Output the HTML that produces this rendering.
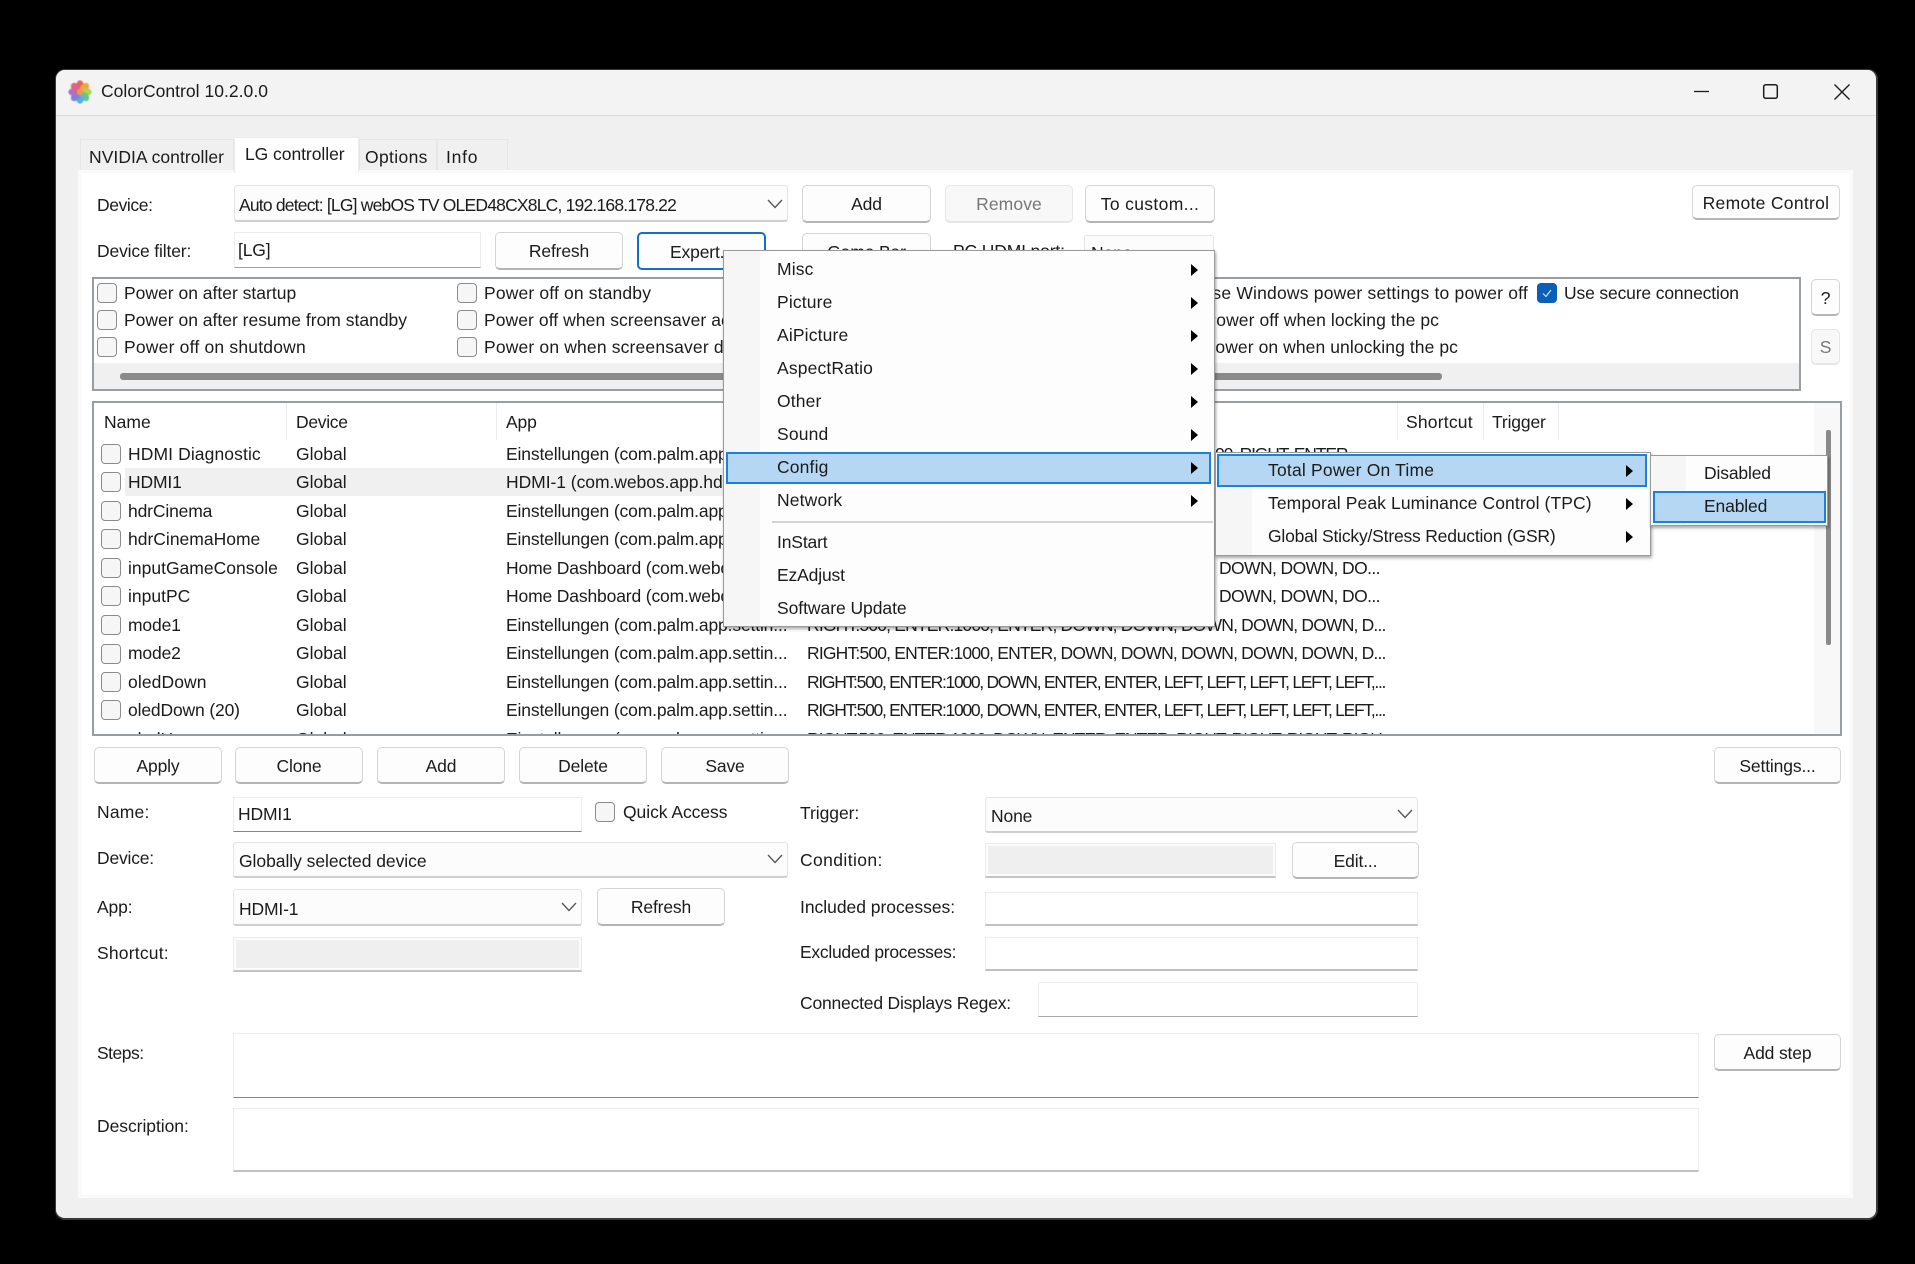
<!DOCTYPE html>
<html><head><meta charset="utf-8"><title>ColorControl</title>
<style>
html,body{margin:0;padding:0;background:#000;width:1915px;height:1264px;overflow:hidden}
body{position:relative;font-family:"Liberation Sans",sans-serif;font-size:17.5px;color:#1b1b1b;letter-spacing:-.15px}
.a,.t,.btn,.in,.cb{position:absolute;box-sizing:border-box}
.t{white-space:nowrap;line-height:20px;height:20px}
.m{letter-spacing:.15px}
.btn{background:#fdfdfd;border:1px solid #d4d4d4;border-bottom:2px solid #b4b4b4;border-radius:5px;display:flex;align-items:center;justify-content:center;white-space:nowrap;padding-top:2px}
.dis{background:#f8f8f8;border-color:#e6e6e6;color:#767676}
.in{background:#fff;border:1px solid #ececec;border-bottom:1.5px solid #858585}
.lt{border-bottom:2px solid #c0c0c0}
.gr{background:#efefef;box-shadow:inset 0 0 0 2px #fbfbfb;border:1px solid #ececec;border-bottom:2px solid #c4c4c4}
.combo{background:#fcfcfc;border:1px solid #e4e4e4;border-bottom:2px solid #cfcfcf;border-radius:3px}
.cb{width:20px;height:20px;background:#f6f6f6;border:1.5px solid #8b8b8b;border-radius:4px}
.tab{background:#f0f0f0;border:1px solid #e6e6e6;border-bottom:0}
.div{position:absolute;width:1px;background:#ececec;top:403px;height:37px}
.menu{background:#fdfdfd;border:1px solid #9a9a9a;box-shadow:1px 2px 3px rgba(0,0,0,.35)}
.gut{background:#f6f6f6}
.hl{background:#b5d7f3;border:2px solid #1a82de}
.arr{position:absolute;width:0;height:0;border-left:7px solid #000;border-top:6px solid transparent;border-bottom:6px solid transparent}
</style></head><body>

<!-- window -->
<div class="a" style="left:55px;top:69px;width:1823px;height:1151px;background:#f0f0f0;border-radius:10px;border:2px solid #3a3a3a;border-width:1px 2px 2px 1px"></div>
<div class="a" style="left:56px;top:70px;width:1820px;height:45px;background:#f3f3f3;border-bottom:1px solid #d9d9d9;border-radius:9px 9px 0 0;box-sizing:content-box"></div>

<svg class="a" style="left:68px;top:80px;filter:blur(.5px);opacity:.88" width="24" height="24" viewBox="0 0 24 24">
<g transform="translate(12 12)">
<ellipse cx="0" cy="-6.5" rx="3.8" ry="5.2" fill="#e9503f"/>
<ellipse cx="0" cy="-6.5" rx="3.8" ry="5.2" fill="#f39a2b" transform="rotate(45)"/>
<ellipse cx="0" cy="-6.5" rx="3.8" ry="5.2" fill="#a8cf3c" transform="rotate(90)"/>
<ellipse cx="0" cy="-6.5" rx="3.8" ry="5.2" fill="#4fc07a" transform="rotate(135)"/>
<ellipse cx="0" cy="-6.5" rx="3.8" ry="5.2" fill="#3ea7ea" transform="rotate(180)"/>
<ellipse cx="0" cy="-6.5" rx="3.8" ry="5.2" fill="#6b73d6" transform="rotate(225)"/>
<ellipse cx="0" cy="-6.5" rx="3.8" ry="5.2" fill="#a65fb5" transform="rotate(270)"/>
<ellipse cx="0" cy="-6.5" rx="3.8" ry="5.2" fill="#d94f7c" transform="rotate(315)"/>
<circle r="3.2" fill="#f08a3a"/>
</g></svg>
<div class="t" style="left:101px;top:81px;letter-spacing:.03px">ColorControl 10.2.0.0</div>

<svg class="a" style="left:1690px;top:80px" width="170" height="24" fill="none" stroke="#1d1d1d">
<path d="M4 11.5H19" stroke-width="1.3"/>
<rect x="73.7" y="4.7" width="13.6" height="13.6" rx="2" stroke-width="1.5"/>
<path d="M144.5 4.5L159.5 19.5M159.5 4.5L144.5 19.5" stroke-width="1.4"/>
</svg>

<!-- tabs -->
<div class="a tab" style="left:80px;top:139px;width:154px;height:33px"></div>
<div class="a tab" style="left:359px;top:139px;width:78px;height:33px"></div>
<div class="a tab" style="left:437px;top:139px;width:71px;height:33px"></div>
<div class="a" style="left:78px;top:170px;width:1775px;height:1028px;background:#fff;box-shadow:inset 0 0 0 3px #fafafa"></div>
<div class="a" style="left:234px;top:137px;width:125px;height:36px;background:#fff;border:1px solid #ececec;border-bottom:0;box-sizing:border-box"></div>
<div class="t" style="left:89px;top:147px;letter-spacing:.05px">NVIDIA controller</div>
<div class="t" style="left:245px;top:144px;letter-spacing:-.05px">LG controller</div>
<div class="t" style="left:365px;top:147px;letter-spacing:.35px">Options</div>
<div class="t" style="left:446px;top:147px;letter-spacing:.75px">Info</div>

<!-- row 1 -->
<div class="t" style="left:97px;top:195px;letter-spacing:-.4px">Device:</div>
<div class="a combo" style="left:234px;top:185px;width:554px;height:37px"></div>
<div class="t" style="left:239px;top:195px;letter-spacing:-.8px">Auto detect: [LG] webOS TV OLED48CX8LC, 192.168.178.22</div>
<svg class="a" style="left:767px;top:198px" width="16" height="12" fill="none" stroke="#555" stroke-width="1.3"><path d="M1 2L8 9.5L15 2"/></svg>
<div class="btn" style="left:802px;top:185px;width:129px;height:38px">Add</div>
<div class="btn dis" style="left:945px;top:185px;width:128px;height:38px;letter-spacing:.1px">Remove</div>
<div class="btn" style="left:1085px;top:185px;width:130px;height:38px;letter-spacing:.35px">To custom...</div>
<div class="btn" style="left:1692px;top:185px;width:148px;height:35px;letter-spacing:.3px">Remote Control</div>

<!-- row 2 -->
<div class="t" style="left:97px;top:241px;">Device filter:</div>
<div class="in" style="left:234px;top:232px;width:247px;height:36px;border-bottom-color:#a0a0a0"></div>
<div class="t" style="left:238px;top:240px;">[LG]</div>
<div class="btn" style="left:495px;top:232px;width:128px;height:38px">Refresh</div>
<div class="btn" style="left:637px;top:232px;width:129px;height:38px;border:2px solid #0f72c8;justify-content:flex-start;padding-left:31px">Expert...</div>
<div class="btn" style="left:802px;top:233px;width:129px;height:38px">Game Bar</div>
<div class="t" style="left:953px;top:241px;">PC HDMI port:</div>
<div class="a combo" style="left:1084px;top:235px;width:130px;height:36px"></div>
<div class="t" style="left:1091px;top:243px;">None</div>

<!-- options group -->
<div class="a" style="left:92px;top:277px;width:1709px;height:114px;background:#fff;border:2px solid #989da2;box-sizing:border-box"></div>
<div class="a" style="left:94px;top:363px;width:1705px;height:26px;background:#f0f0f0"></div>
<div class="a" style="left:120px;top:373px;width:1322px;height:7px;background:#8a8a8a;border-radius:3px"></div>
<div class="cb" style="left:97px;top:283px"></div><div class="t" style="left:124px;top:283px;letter-spacing:0">Power on after startup</div>
<div class="cb" style="left:97px;top:310px"></div><div class="t" style="left:124px;top:310px;letter-spacing:0">Power on after resume from standby</div>
<div class="cb" style="left:97px;top:337px"></div><div class="t" style="left:124px;top:337px;letter-spacing:.2px">Power off on shutdown</div>
<div class="cb" style="left:457px;top:283px"></div><div class="t" style="left:484px;top:283px;letter-spacing:.15px">Power off on standby</div>
<div class="cb" style="left:457px;top:310px"></div><div class="t" style="left:484px;top:310px;letter-spacing:.07px">Power off when screensaver activates</div>
<div class="cb" style="left:457px;top:337px"></div><div class="t" style="left:484px;top:337px;letter-spacing:.16px">Power on when screensaver deactivates</div>
<div class="t" style="right:387px;top:283px;letter-spacing:.2px">Use Windows power settings to power off</div>
<div class="t" style="right:476px;top:310px;letter-spacing:.08px">Power off when locking the pc</div>
<div class="t" style="right:457px;top:337px;letter-spacing:.08px">Power on when unlocking the pc</div>
<div class="a" style="left:1537px;top:283px;width:20px;height:20px;background:#0a5fb8;border-radius:4px"></div>
<svg class="a" style="left:1537px;top:283px" width="20" height="20" fill="none" stroke="#cfe4f7" stroke-width="1.2"><path d="M6 10.5L9 13.5L14 7"/></svg>
<div class="t" style="left:1564px;top:283px;">Use secure connection</div>
<div class="btn" style="left:1811px;top:279px;width:29px;height:37px">?</div>
<div class="btn dis" style="left:1811px;top:329px;width:29px;height:36px">S</div>

<!-- list -->
<div class="a" style="left:92px;top:401px;width:1750px;height:335px;background:#fff;border:2px solid #989da2;box-sizing:border-box;overflow:hidden">
<div class="a" style="left:1720px;top:0;width:28px;height:331px;background:#f8f8f8"></div>
<div class="a" style="left:1732px;top:27px;width:5px;height:215px;background:#8a8a8a;border-radius:2px"></div>
<div class="a" style="left:31px;top:65px;width:1680px;height:28px;background:#f0f0f0"></div>
<div class="cb" style="left:7px;top:335px"></div>
<div class="t" style="left:34px;top:326px;">oledUp</div><div class="t" style="left:202px;top:326px;letter-spacing:0">Global</div>
<div class="t" style="left:412px;top:326px;">Einstellungen (com.palm.app.settin...</div>
<div class="t" style="left:713px;top:326px;letter-spacing:-1px">RIGHT:500, ENTER:1000, DOWN, ENTER, ENTER, RIGHT, RIGHT, RIGHT, RIGH...</div>
</div>
<div class="div" style="left:286px"></div><div class="div" style="left:496px"></div><div class="div" style="left:1397px"></div><div class="div" style="left:1483px"></div><div class="div" style="left:1558px"></div>
<div class="t" style="left:104px;top:412px;letter-spacing:0">Name</div>
<div class="t" style="left:296px;top:412px;letter-spacing:-.3px">Device</div>
<div class="t" style="left:506px;top:412px;">App</div>
<div class="t" style="left:1406px;top:412px;letter-spacing:.2px">Shortcut</div>
<div class="t" style="left:1492px;top:412px;">Trigger</div>

<div class="cb" style="left:101px;top:444px"></div><div class="t" style="left:128px;top:444px;letter-spacing:.1px">HDMI Diagnostic</div><div class="t" style="left:296px;top:444px;letter-spacing:0">Global</div><div class="t" style="left:506px;top:444px;">Einstellungen (com.palm.app.settin...</div><div class="t" style="left:1215px;top:444px;letter-spacing:-1.15px">00, RIGHT, ENTER</div>
<div class="cb" style="left:101px;top:472px"></div><div class="t" style="left:128px;top:472px;">HDMI1</div><div class="t" style="left:296px;top:472px;letter-spacing:0">Global</div><div class="t" style="left:506px;top:472px;letter-spacing:-.05px">HDMI-1 (com.webos.app.hdmi1)</div>
<div class="cb" style="left:101px;top:501px"></div><div class="t" style="left:128px;top:501px;">hdrCinema</div><div class="t" style="left:296px;top:501px;letter-spacing:0">Global</div><div class="t" style="left:506px;top:501px;">Einstellungen (com.palm.app.settin...</div>
<div class="cb" style="left:101px;top:529px"></div><div class="t" style="left:128px;top:529px;letter-spacing:0">hdrCinemaHome</div><div class="t" style="left:296px;top:529px;letter-spacing:0">Global</div><div class="t" style="left:506px;top:529px;">Einstellungen (com.palm.app.settin...</div>
<div class="cb" style="left:101px;top:558px"></div><div class="t" style="left:128px;top:558px;letter-spacing:0">inputGameConsole</div><div class="t" style="left:296px;top:558px;letter-spacing:0">Global</div><div class="t" style="left:506px;top:558px;">Home Dashboard (com.webos.app.home)</div><div class="t" style="left:1219px;top:558px;letter-spacing:-.6px">DOWN, DOWN, DO...</div>
<div class="cb" style="left:101px;top:586px"></div><div class="t" style="left:128px;top:586px;letter-spacing:0">inputPC</div><div class="t" style="left:296px;top:586px;letter-spacing:0">Global</div><div class="t" style="left:506px;top:586px;">Home Dashboard (com.webos.app.home)</div><div class="t" style="left:1219px;top:586px;letter-spacing:-.6px">DOWN, DOWN, DO...</div>
<div class="cb" style="left:101px;top:615px"></div><div class="t" style="left:128px;top:615px;">mode1</div><div class="t" style="left:296px;top:615px;letter-spacing:0">Global</div><div class="t" style="left:506px;top:615px;">Einstellungen (com.palm.app.settin...</div><div class="t" style="left:807px;top:615px;letter-spacing:-.82px">RIGHT:500, ENTER:1000, ENTER, DOWN, DOWN, DOWN, DOWN, DOWN, D...</div>
<div class="cb" style="left:101px;top:644px"></div><div class="t" style="left:128px;top:643px;">mode2</div><div class="t" style="left:296px;top:643px;letter-spacing:0">Global</div><div class="t" style="left:506px;top:643px;">Einstellungen (com.palm.app.settin...</div><div class="t" style="left:807px;top:643px;letter-spacing:-.82px">RIGHT:500, ENTER:1000, ENTER, DOWN, DOWN, DOWN, DOWN, DOWN, D...</div>
<div class="cb" style="left:101px;top:672px"></div><div class="t" style="left:128px;top:672px;letter-spacing:.1px">oledDown</div><div class="t" style="left:296px;top:672px;letter-spacing:0">Global</div><div class="t" style="left:506px;top:672px;">Einstellungen (com.palm.app.settin...</div><div class="t" style="left:807px;top:672px;letter-spacing:-1.29px">RIGHT:500, ENTER:1000, DOWN, ENTER, ENTER, LEFT, LEFT, LEFT, LEFT, LEFT,...</div>
<div class="cb" style="left:101px;top:700px"></div><div class="t" style="left:128px;top:700px;">oledDown (20)</div><div class="t" style="left:296px;top:700px;letter-spacing:0">Global</div><div class="t" style="left:506px;top:700px;">Einstellungen (com.palm.app.settin...</div><div class="t" style="left:807px;top:700px;letter-spacing:-1.29px">RIGHT:500, ENTER:1000, DOWN, ENTER, ENTER, LEFT, LEFT, LEFT, LEFT, LEFT,...</div>

<!-- action buttons -->
<div class="btn" style="left:94px;top:747px;width:128px;height:37px">Apply</div>
<div class="btn" style="left:235px;top:747px;width:128px;height:37px">Clone</div>
<div class="btn" style="left:377px;top:747px;width:128px;height:37px">Add</div>
<div class="btn" style="left:519px;top:747px;width:128px;height:37px">Delete</div>
<div class="btn" style="left:661px;top:747px;width:128px;height:37px">Save</div>
<div class="btn" style="left:1714px;top:747px;width:127px;height:37px">Settings...</div>

<!-- form left -->
<div class="t" style="left:97px;top:802px;letter-spacing:.2px">Name:</div>
<div class="in" style="left:233px;top:797px;width:349px;height:35px"></div>
<div class="t" style="left:238px;top:804px;">HDMI1</div>
<div class="cb" style="left:595px;top:802px"></div><div class="t" style="left:623px;top:802px;letter-spacing:-.05px">Quick Access</div>
<div class="t" style="left:97px;top:848px;letter-spacing:-.2px">Device:</div>
<div class="a combo" style="left:233px;top:842px;width:555px;height:36px"></div>
<div class="t" style="left:239px;top:851px;letter-spacing:-.05px">Globally selected device</div>
<svg class="a" style="left:767px;top:853px" width="16" height="12" fill="none" stroke="#555" stroke-width="1.3"><path d="M1 2L8 9.5L15 2"/></svg>
<div class="t" style="left:97px;top:897px;">App:</div>
<div class="a combo" style="left:233px;top:889px;width:349px;height:37px"></div>
<div class="t" style="left:239px;top:899px;">HDMI-1</div>
<svg class="a" style="left:561px;top:901px" width="16" height="12" fill="none" stroke="#555" stroke-width="1.3"><path d="M1 2L8 9.5L15 2"/></svg>
<div class="btn" style="left:597px;top:888px;width:128px;height:38px">Refresh</div>
<div class="t" style="left:97px;top:943px;letter-spacing:.2px">Shortcut:</div>
<div class="a gr" style="left:233px;top:937px;width:349px;height:35px"></div>
<div class="t" style="left:97px;top:1043px;letter-spacing:-.5px">Steps:</div>
<div class="in" style="left:233px;top:1033px;width:1466px;height:65px"></div>
<div class="t" style="left:97px;top:1116px;letter-spacing:-.05px">Description:</div>
<div class="in lt" style="left:233px;top:1108px;width:1466px;height:64px"></div>
<div class="btn" style="left:1714px;top:1034px;width:127px;height:37px">Add step</div>

<!-- form right -->
<div class="t" style="left:800px;top:803px;letter-spacing:-.05px">Trigger:</div>
<div class="a combo" style="left:985px;top:797px;width:433px;height:36px"></div>
<div class="t" style="left:991px;top:806px;">None</div>
<svg class="a" style="left:1397px;top:808px" width="16" height="12" fill="none" stroke="#555" stroke-width="1.3"><path d="M1 2L8 9.5L15 2"/></svg>
<div class="t" style="left:800px;top:850px;letter-spacing:.4px">Condition:</div>
<div class="a gr" style="left:985px;top:843px;width:291px;height:35px"></div>
<div class="btn" style="left:1292px;top:842px;width:127px;height:37px">Edit...</div>
<div class="t" style="left:800px;top:897px;letter-spacing:-.03px">Included processes:</div>
<div class="in lt" style="left:985px;top:892px;width:433px;height:34px"></div>
<div class="t" style="left:800px;top:942px;letter-spacing:-.28px">Excluded processes:</div>
<div class="in lt" style="left:985px;top:937px;width:433px;height:34px"></div>
<div class="t" style="left:800px;top:993px;letter-spacing:-.2px">Connected Displays Regex:</div>
<div class="in" style="left:1038px;top:982px;width:380px;height:35px;border-bottom-color:#a8a8a8"></div>

<!-- main menu -->
<div class="a menu" style="left:723px;top:250px;width:492px;height:377px"></div>
<div class="a gut" style="left:724px;top:251px;width:36px;height:375px"></div>
<div class="t m" style="left:777px;top:259px;">Misc</div><div class="arr" style="left:1191px;top:264px"></div>
<div class="t m" style="left:777px;top:292px;">Picture</div><div class="arr" style="left:1191px;top:297px"></div>
<div class="t m" style="left:777px;top:325px;">AiPicture</div><div class="arr" style="left:1191px;top:330px"></div>
<div class="t m" style="left:777px;top:358px;">AspectRatio</div><div class="arr" style="left:1191px;top:363px"></div>
<div class="t m" style="left:777px;top:391px;">Other</div><div class="arr" style="left:1191px;top:396px"></div>
<div class="t m" style="left:777px;top:424px;">Sound</div><div class="arr" style="left:1191px;top:429px"></div>
<div class="a hl" style="left:726px;top:452px;width:485px;height:32px;box-sizing:border-box"></div>
<div class="t m" style="left:777px;top:457px;">Config</div><div class="arr" style="left:1191px;top:462px"></div>
<div class="t m" style="left:777px;top:490px;">Network</div><div class="arr" style="left:1191px;top:495px"></div>
<div class="a" style="left:772px;top:521px;width:441px;height:2px;background:#d4d4d4"></div>
<div class="t" style="left:777px;top:532px;">InStart</div>
<div class="t" style="left:777px;top:565px;">EzAdjust</div>
<div class="t" style="left:777px;top:598px;letter-spacing:-.05px">Software Update</div>

<!-- submenu 1 -->
<div class="a menu" style="left:1215px;top:452px;width:436px;height:104px"></div>
<div class="a gut" style="left:1216px;top:453px;width:36px;height:102px"></div>
<div class="a hl" style="left:1217px;top:454px;width:430px;height:33px;box-sizing:border-box"></div>
<div class="t" style="left:1268px;top:460px;letter-spacing:.2px">Total Power On Time</div><div class="arr" style="left:1626px;top:465px"></div>
<div class="t" style="left:1268px;top:493px;letter-spacing:.1px">Temporal Peak Luminance Control (TPC)</div><div class="arr" style="left:1626px;top:498px"></div>
<div class="t" style="left:1268px;top:526px;letter-spacing:-.2px">Global Sticky/Stress Reduction (GSR)</div><div class="arr" style="left:1626px;top:531px"></div>

<!-- submenu 2 -->
<div class="a menu" style="left:1650px;top:455px;width:178px;height:71px"></div>
<div class="a gut" style="left:1651px;top:456px;width:35px;height:69px"></div>
<div class="a hl" style="left:1653px;top:491px;width:173px;height:32px;box-sizing:border-box"></div>
<div class="t" style="left:1704px;top:463px;">Disabled</div>
<div class="t" style="left:1704px;top:496px;">Enabled</div>

</body></html>
